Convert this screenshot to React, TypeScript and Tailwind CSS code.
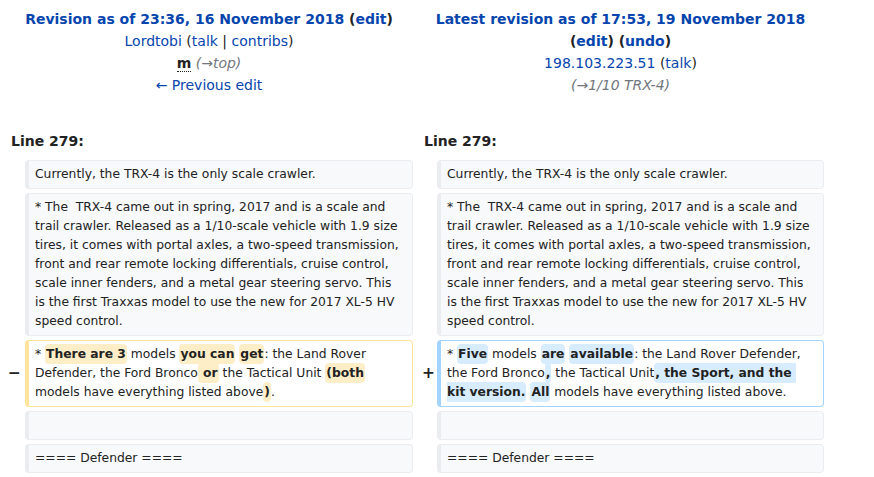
import type { ReactNode } from 'react';

type Kind = 'context' | 'deleted' | 'added';

const boxStyles: Record<Kind, string> = {
  context: 'bg-[#f8f9fa] border-[#eaecf0] pr-[8px]',
  deleted: 'bg-white border-[#ffe49c] pr-[8px]',
  added: 'bg-white border-[#a3d3ff] pr-[14px]',
};

function Cell({ kind, children }: { kind: Kind; children?: ReactNode }) {
  return (
    <div
      className={`rounded-[4px] border border-l-4 pl-[6px] py-[4px] text-[12.32px] leading-[19px] whitespace-pre-wrap break-words text-[#222] ${boxStyles[kind]}`}
    >
      {children}
    </div>
  );
}

function Del({ children }: { children: ReactNode }) {
  return <del className="bg-[#feeec8] font-bold rounded-[4px] px-[1px] py-[3px] no-underline">{children}</del>;
}

function Ins({ children }: { children: ReactNode }) {
  return <ins className="bg-[#d8ecff] font-bold rounded-[4px] px-[1px] py-[3px] no-underline">{children}</ins>;
}

const link = 'text-[#0645ad]';

export default function App() {
  return (
    <div className="min-h-screen bg-white font-[family-name:DejaVu_Sans,sans-serif] text-[#222]">
      <div className="grid grid-cols-[16px_388px_16px_387px] gap-x-[4px] gap-y-[4px] pl-[5px] pt-[8px]">
        {/* Old revision header */}
        <div className="col-span-2 text-center text-[14px] leading-[22px]">
          <div className="font-bold">
            <span className={link}>Revision as of 23:36, 16 November 2018</span> (<span className={link}>edit</span>)
          </div>
          <div>
            <span className={link}>Lordtobi</span> (<span className={link}>talk</span> | <span className={link}>contribs</span>)
          </div>
          <div>
            <abbr className="font-bold no-underline border-b border-dotted border-[#222]">m</abbr>{' '}
            <span className="italic text-[#72777d]">(→top)</span>
          </div>
          <div className={link}>← Previous edit</div>
        </div>

        {/* New revision header */}
        <div className="col-span-2 text-center text-[14px] leading-[22px]">
          <div className="font-bold">
            <span className={link}>Latest revision as of 17:53, 19 November 2018</span>{' '}
            <span>(<span className={link}>edit</span>)</span> <span>(<span className={link}>undo</span>)</span>
          </div>
          <div>
            <span className={link}>198.103.223.51</span> (<span className={link}>talk</span>)
          </div>
          <div className="italic text-[#72777d]">(→1/10 TRX-4)</div>
        </div>

        {/* Line numbers */}
        <div className="col-span-2 mt-[30px] pb-[4px] pl-[6px] text-[14px] leading-[22px] font-bold">Line 279:</div>
        <div className="col-span-2 mt-[30px] pb-[4px] pl-[7px] text-[14px] leading-[22px] font-bold">Line 279:</div>

        {/* Context */}
        <div />
        <Cell kind="context">Currently, the TRX-4 is the only scale crawler.</Cell>
        <div />
        <Cell kind="context">Currently, the TRX-4 is the only scale crawler.</Cell>

        <div />
        <Cell kind="context">
          * The  TRX-4 came out in spring, 2017 and is a scale and trail crawler. Released as a 1/10-scale vehicle with 1.9 size tires, it comes with portal axles, a two-speed transmission, front and rear remote locking differentials, cruise control, scale inner fenders, and a metal gear steering servo. This is the first Traxxas model to use the new for 2017 XL-5 HV speed control.
        </Cell>
        <div />
        <Cell kind="context">
          * The  TRX-4 came out in spring, 2017 and is a scale and trail crawler. Released as a 1/10-scale vehicle with 1.9 size tires, it comes with portal axles, a two-speed transmission, front and rear remote locking differentials, cruise control, scale inner fenders, and a metal gear steering servo. This is the first Traxxas model to use the new for 2017 XL-5 HV speed control.
        </Cell>

        {/* Changed line */}
        <div className="self-center text-right text-[15.4px] font-bold leading-[1.2]">−</div>
        <Cell kind="deleted">
          * <Del>There are 3</Del> models <Del>you can</Del> <Del>get</Del>: the Land Rover Defender, the Ford Bronco<Del> or</Del> the Tactical Unit <Del>(both</Del> models have everything listed above<Del>)</Del>.
        </Cell>
        <div className="self-center -mr-[2px] text-right text-[15.4px] font-bold leading-[1.2]">+</div>
        <Cell kind="added">
          * <Ins>Five</Ins> models <Ins>are</Ins> <Ins>available</Ins>: the Land Rover Defender, the Ford Bronco<Ins>,</Ins> the Tactical Unit<Ins>, the Sport, and the kit version.</Ins> <Ins>All</Ins> models have everything listed above.
        </Cell>

        <div />
        <Cell kind="context">{'\u00a0'}</Cell>
        <div />
        <Cell kind="context">{'\u00a0'}</Cell>

        <div />
        <Cell kind="context">==== Defender ====</Cell>
        <div />
        <Cell kind="context">==== Defender ====</Cell>
      </div>
    </div>
  );
}
